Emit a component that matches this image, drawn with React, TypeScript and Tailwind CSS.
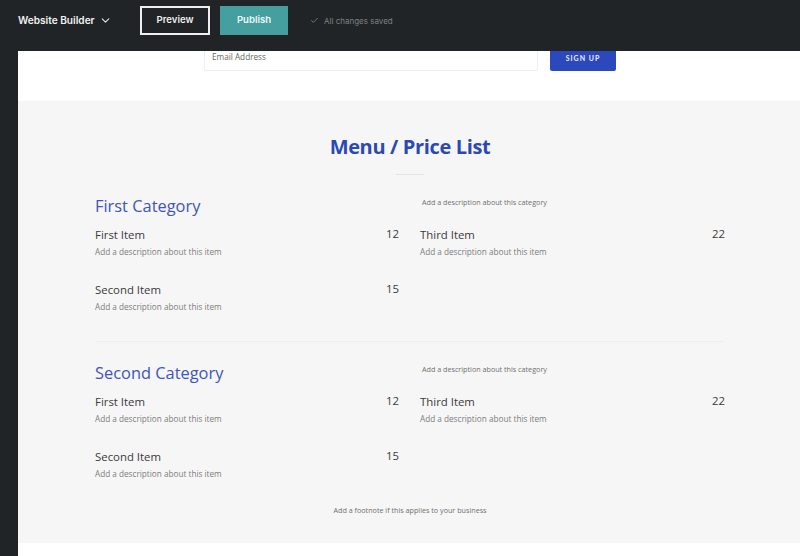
import React from 'react';
import { ChevronDown, Check } from 'lucide-react';

const Item = ({ name, price }: { name: string; price: string }) => (
  <div className="h-[55px] flex justify-between">
    <div>
      <div className="text-[11.4px] leading-[16px] text-[#3a3a3a] mt-[1px]">{name}</div>
      <div className="text-[8.2px] leading-[12px] text-[#7d7d7d] mt-[3px]">Add a description about this item</div>
    </div>
    <div className="text-[11.4px] leading-[16px] text-[#3a3a3a]">{price}</div>
  </div>
);

const Category = ({ title }: { title: string }) => (
  <div>
    <div className="flex h-[28px]">
      <h2 className="w-[327px] text-[16.4px] leading-[24px] text-[#3f55b8]">{title}</h2>
      <p className="text-[7.2px] leading-[12px] mt-[2.5px] text-[#707070]">Add a description about this category</p>
    </div>
    <div className="grid grid-cols-[304px_1fr] gap-x-[21px] mt-[4.5px]">
      <div>
        <Item name="First Item" price="12" />
        <Item name="Second Item" price="15" />
      </div>
      <div>
        <Item name="Third Item" price="22" />
      </div>
    </div>
  </div>
);

export default function App() {
  return (
    <div className="w-[800px] h-[556px] overflow-hidden flex flex-col bg-[#212427] font-['Open_Sans',sans-serif]">
      <header className="h-[51px] shrink-0 flex items-center pl-[18px] pb-[10px] font-['Inter',sans-serif]">
        <span className="w-[76px] whitespace-nowrap text-[10.1px] font-semibold text-[#f2f2f2]">Website Builder</span>
        <ChevronDown className="w-[13px] h-[13px] ml-[5px] text-[#e5e5e5]" />
        <button className="ml-[28px] w-[70px] h-[29px] border-2 border-[#eeeeee] text-[9.6px] font-semibold text-[#eeeeee]">Preview</button>
        <button className="ml-[10px] w-[68px] h-[29px] bg-[#459f9f] text-[9.6px] font-semibold text-[#eef7f7]">Publish</button>
        <Check className="w-[9px] h-[9px] ml-[22px] text-[#8a8d8f]" />
        <span className="ml-[5px] text-[8px] text-[#7d8082]">All changes saved</span>
      </header>

      <main className="flex-1 ml-[18px] bg-white flex flex-col">
        <div className="h-[50px] shrink-0">
          <div className="flex items-start pl-[186px] gap-[12px]">
            <div className="w-[334px] h-[20px] pl-[7px] border-b border-r border-l border-[#eeeeee] rounded-b-[2px] text-[8.2px] leading-[12px] text-[#666]">Email Address</div>
            <button className="w-[66px] h-[20px] pb-[5px] bg-[#2b49bd] rounded-b-[2px] text-[7px] font-bold tracking-[1px] text-[#e8ecf8] font-['Lato',sans-serif]">SIGN UP</button>
          </div>
        </div>

        <section className="h-[442px] bg-[#f6f6f6] pl-[77px] pr-[75px] flex flex-col">
          <h1 className="mt-[32px] text-center text-[20px] leading-[28px] font-bold tracking-[-0.35px] text-[#2b49b5]">Menu / Price List</h1>
          <div className="w-[28px] h-px bg-[#e4e4e4] mx-auto mt-[13px]" />
          <div className="mt-[18.5px]">
            <Category title="First Category" />
          </div>
          <div className="h-px bg-[#eeeeee] mt-[5px]" />
          <div className="mt-[18.5px]">
            <Category title="Second Category" />
          </div>
          <p className="text-center text-[7.2px] leading-[12px] text-[#707070] mt-[1px]">Add a footnote if this applies to your business</p>
        </section>
      </main>
    </div>
  );
}
